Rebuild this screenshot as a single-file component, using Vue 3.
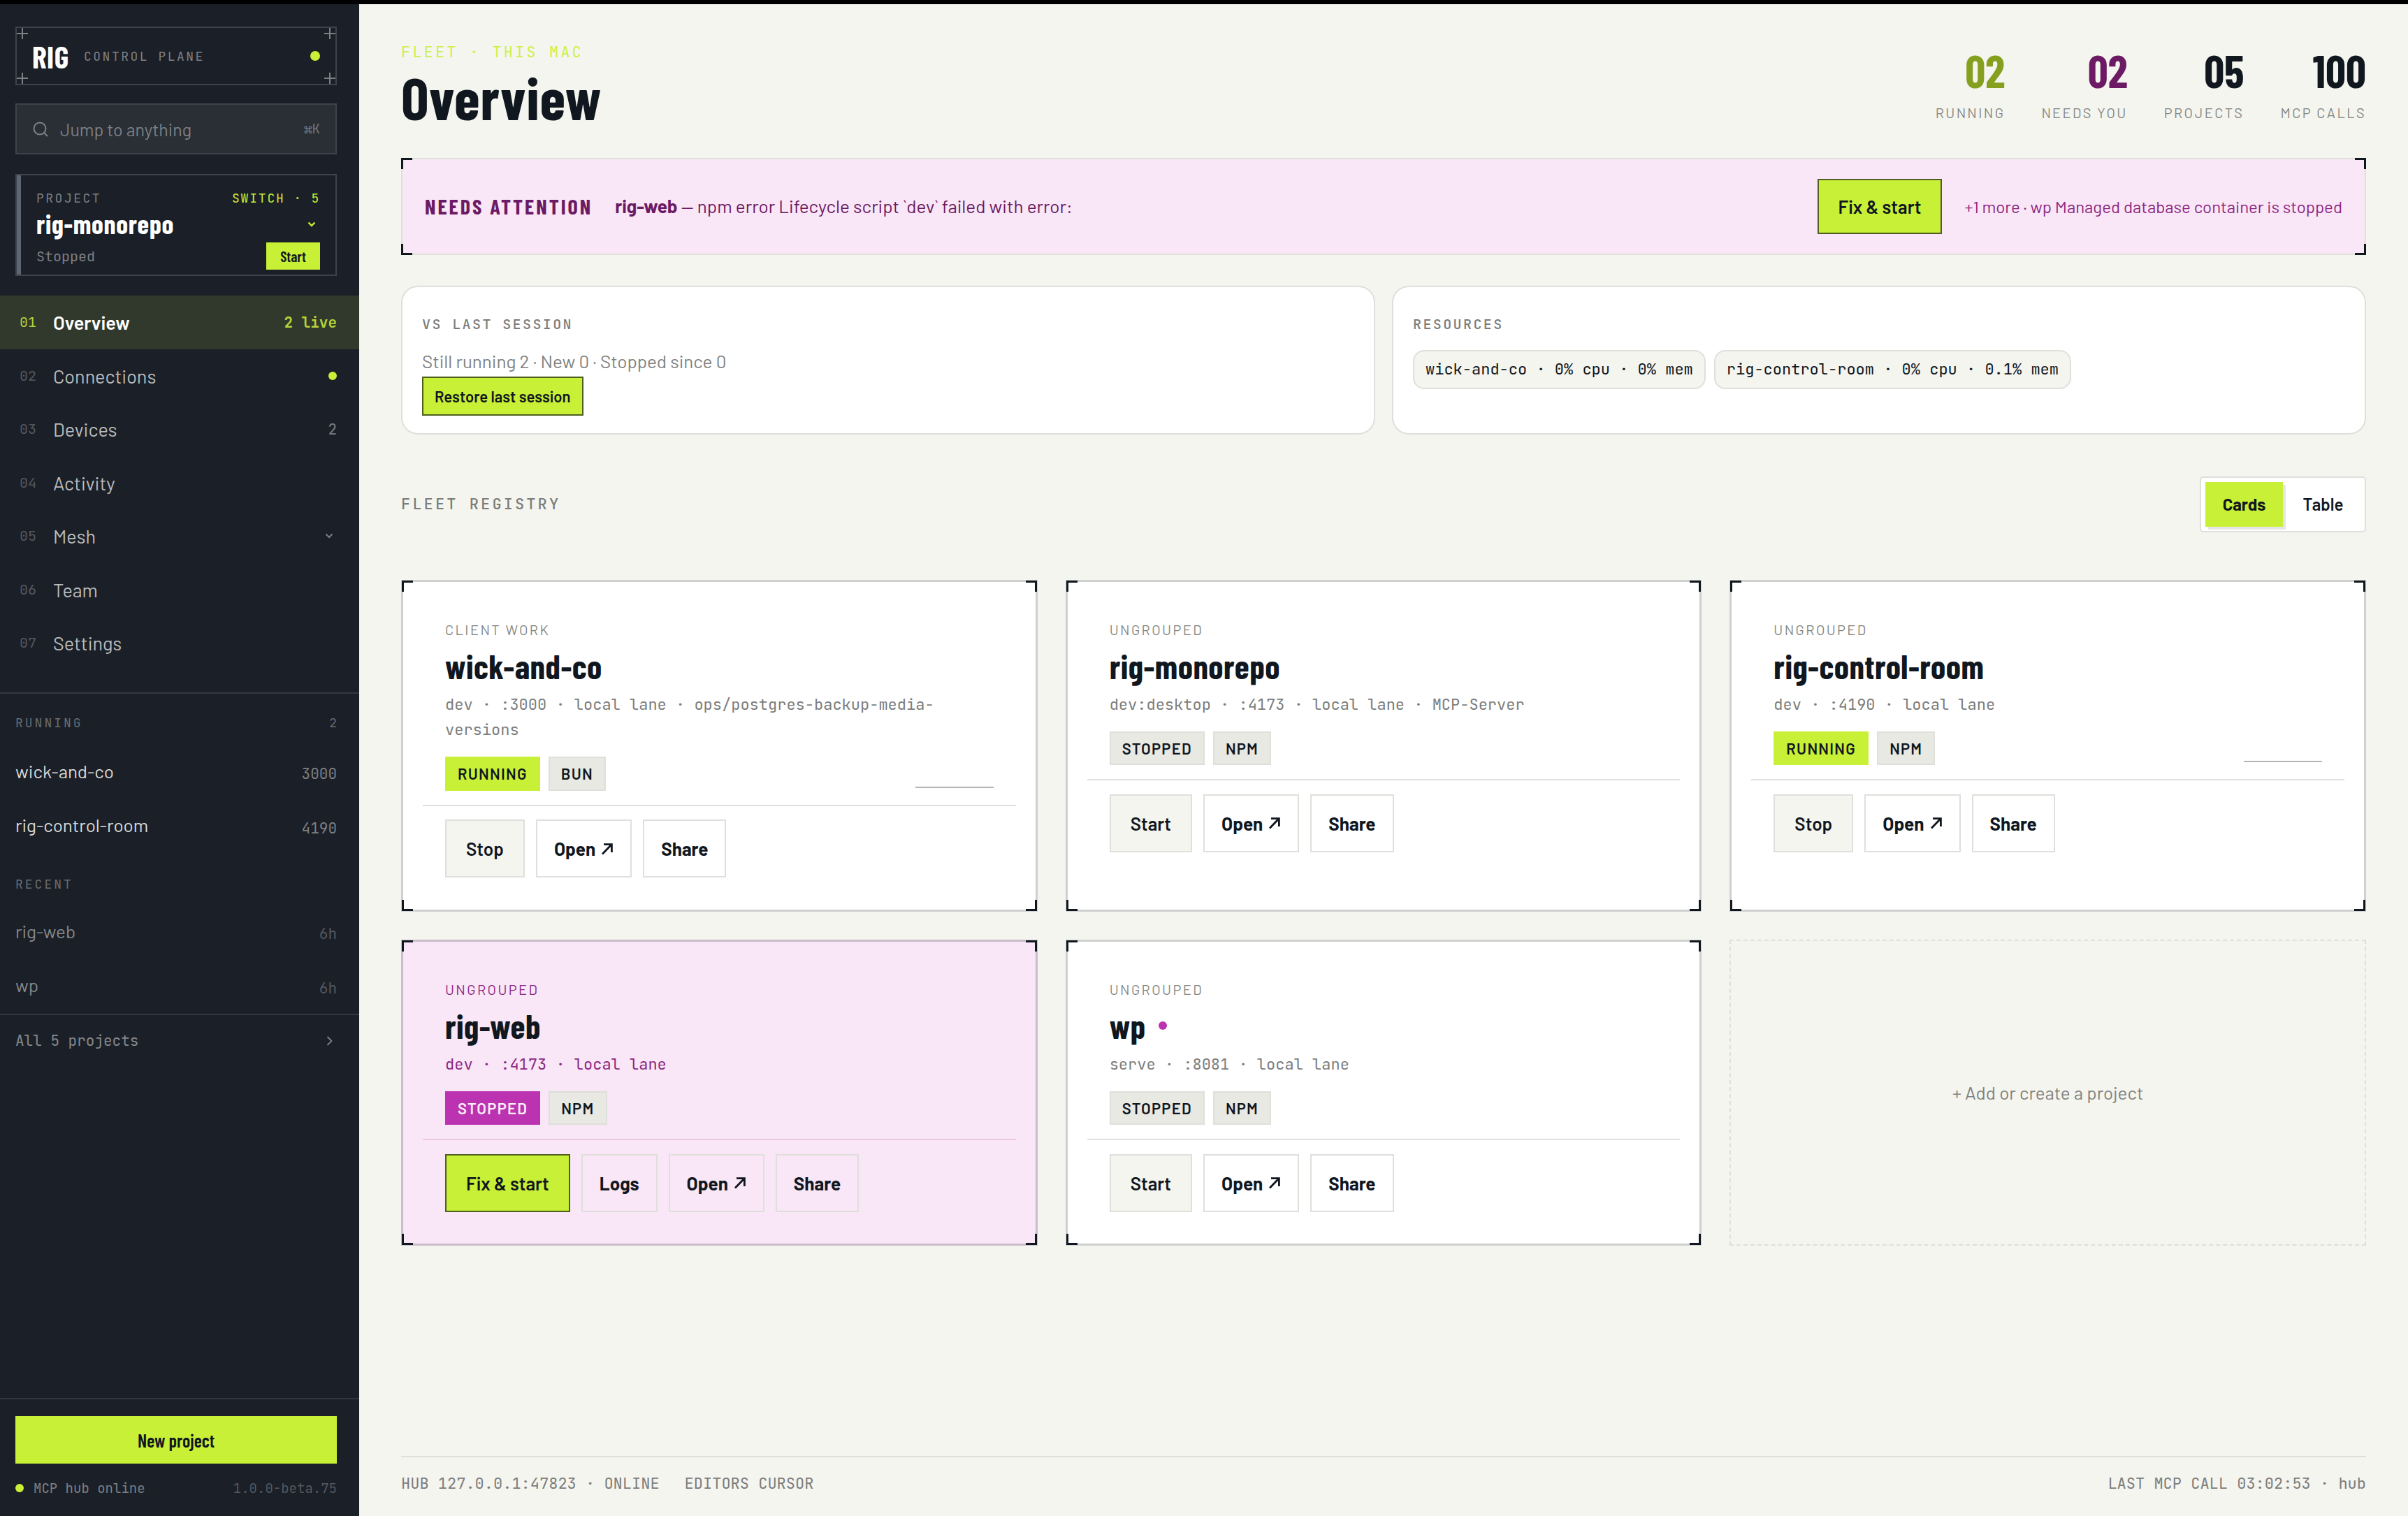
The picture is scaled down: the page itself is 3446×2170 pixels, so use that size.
<script setup>
const navItems = [
  { num: '01', label: 'Overview', active: true, note: '2 live' },
  { num: '02', label: 'Connections', dot: true },
  { num: '03', label: 'Devices', note: '2' },
  { num: '04', label: 'Activity' },
  { num: '05', label: 'Mesh', chevron: true },
  { num: '06', label: 'Team' },
  { num: '07', label: 'Settings' }
]

const running = [
  { name: 'wick-and-co', meta: '3000' },
  { name: 'rig-control-room', meta: '4190' }
]

const recent = [
  { name: 'rig-web', meta: '6h' },
  { name: 'wp', meta: '6h' }
]

const stats = [
  { value: '02', label: 'Running', tone: 'green' },
  { value: '02', label: 'Needs you', tone: 'plum' },
  { value: '05', label: 'Projects', tone: 'ink' },
  { value: '100', label: 'MCP calls', tone: 'ink' }
]

const resources = [
  'wick-and-co · 0% cpu · 0% mem',
  'rig-control-room · 0% cpu · 0.1% mem'
]

const projects = [
  {
    group: 'Client work',
    name: 'wick-and-co',
    meta: 'dev · :3000 · local lane · ops/postgres-backup-media-versions',
    status: 'Running',
    manager: 'Bun',
    action: 'Stop'
  },
  {
    group: 'Ungrouped',
    name: 'rig-monorepo',
    meta: 'dev:desktop · :4173 · local lane · MCP-Server',
    status: 'Stopped',
    manager: 'NPM',
    action: 'Start'
  },
  {
    group: 'Ungrouped',
    name: 'rig-control-room',
    meta: 'dev · :4190 · local lane',
    status: 'Running',
    manager: 'NPM',
    action: 'Stop'
  },
  {
    group: 'Ungrouped',
    name: 'rig-web',
    meta: 'dev · :4173 · local lane',
    status: 'Stopped',
    manager: 'NPM',
    action: 'Fix & start',
    failed: true
  },
  {
    group: 'Ungrouped',
    name: 'wp',
    meta: 'serve · :8081 · local lane',
    status: 'Stopped',
    manager: 'NPM',
    action: 'Start',
    warn: true
  }
]
</script>

<template>
  <div class="app">
    <aside class="sidebar">
      <div class="brand">
        <span class="brand__name">RIG</span>
        <span class="brand__sub">CONTROL PLANE</span>
        <span class="brand__dot"></span>
        <i class="cross cross--tl"></i>
        <i class="cross cross--tr"></i>
        <i class="cross cross--bl"></i>
        <i class="cross cross--br"></i>
      </div>

      <div class="search">
        <svg class="search__icon" viewBox="0 0 24 24" fill="none" stroke="currentColor" stroke-width="2" stroke-linecap="round">
          <circle cx="11" cy="11" r="8.5" />
          <path d="M17.2 17.2 L21.5 21.5" />
        </svg>
        <span class="search__text">Jump to anything</span>
        <kbd class="search__key">⌘K</kbd>
      </div>

      <div class="current">
        <div class="current__top">
          <span class="current__label">PROJECT</span>
          <span class="current__switch">SWITCH · 5</span>
        </div>
        <div class="current__mid">
          <span class="current__name">rig-monorepo</span>
          <svg class="chevron chevron--lime" viewBox="0 0 24 24" fill="none" stroke="currentColor" stroke-width="2.4">
            <path d="M7.5 9.5 L12 14 L16.5 9.5" />
          </svg>
        </div>
        <div class="current__bottom">
          <span class="current__state">Stopped</span>
          <button class="current__start">Start</button>
        </div>
      </div>

      <nav class="nav">
        <a v-for="item in navItems" :key="item.num" :class="['nav__item', { 'nav__item--active': item.active }]">
          <span class="nav__num">{{ item.num }}</span>
          <span class="nav__label">{{ item.label }}</span>
          <span v-if="item.note" class="nav__note">{{ item.note }}</span>
          <span v-if="item.dot" class="nav__dot"></span>
          <svg v-if="item.chevron" class="chevron chevron--nav" viewBox="0 0 24 24" fill="none" stroke="currentColor" stroke-width="2">
            <path d="M7.5 9.5 L12 14 L16.5 9.5" />
          </svg>
        </a>
      </nav>

      <section class="list">
        <div class="list__head">
          <span>RUNNING</span>
          <span class="list__count">2</span>
        </div>
        <div v-for="row in running" :key="row.name" class="list__row">
          <span class="list__name">{{ row.name }}</span>
          <span class="list__meta">{{ row.meta }}</span>
        </div>
        <div class="list__head list__head--recent">
          <span>RECENT</span>
        </div>
        <div v-for="row in recent" :key="row.name" class="list__row list__row--recent">
          <span class="list__name">{{ row.name }}</span>
          <span class="list__meta">{{ row.meta }}</span>
        </div>
      </section>

      <a class="all-projects">
        <span>All 5 projects</span>
        <svg class="chevron chevron--nav" viewBox="0 0 24 24" fill="none" stroke="currentColor" stroke-width="1.8">
          <path d="M9.5 6 L15.5 12 L9.5 18" />
        </svg>
      </a>

      <div class="sidebar__foot">
        <button class="new-project">New project</button>
        <div class="hub">
          <span class="hub__dot"></span>
          <span class="hub__text">MCP hub online</span>
          <span class="hub__version">1.0.0-beta.75</span>
        </div>
      </div>
    </aside>

    <main class="main">
      <header class="header">
        <div class="header__titles">
          <div class="header__eyebrow">FLEET · THIS MAC</div>
          <h1 class="header__title">Overview</h1>
        </div>
        <div class="stats">
          <div v-for="stat in stats" :key="stat.label" class="stat">
            <div :class="['stat__value', `stat__value--${stat.tone}`]">{{ stat.value }}</div>
            <div class="stat__label">{{ stat.label }}</div>
          </div>
        </div>
      </header>

      <section class="banner corners">
        <strong class="banner__title">NEEDS ATTENTION</strong>
        <p class="banner__text"><b>rig-web</b> — npm error Lifecycle script `dev` failed with error:</p>
        <button class="btn btn--lime banner__btn">Fix &amp; start</button>
        <span class="banner__more">+1 more · wp Managed database container is stopped</span>
      </section>

      <div class="panels">
        <section class="panel">
          <h2 class="panel__title">VS LAST SESSION</h2>
          <p class="panel__text">Still running 2 · New 0 · Stopped since 0</p>
          <button class="btn btn--lime btn--small">Restore last session</button>
        </section>
        <section class="panel">
          <h2 class="panel__title">RESOURCES</h2>
          <div class="pills">
            <span v-for="text in resources" :key="text" class="pill">{{ text }}</span>
          </div>
        </section>
      </div>

      <div class="registry">
        <h2 class="registry__title">FLEET REGISTRY</h2>
        <div class="toggle">
          <button class="toggle__item toggle__item--on">Cards</button>
          <button class="toggle__item">Table</button>
        </div>
      </div>

      <div class="grid">
        <article v-for="p in projects" :key="p.name" :class="['card corners', { 'card--failed': p.failed }]">
          <div class="card__group">{{ p.group }}</div>
          <h3 class="card__name">
            <span class="card__name-text">{{ p.name }}</span>
            <span v-if="p.warn" class="card__warn"></span>
          </h3>
          <p class="card__meta">{{ p.meta }}</p>
          <div class="card__badges">
            <span :class="['badge', { 'badge--running': p.status === 'Running', 'badge--failed': p.failed }]">{{ p.status }}</span>
            <span class="badge">{{ p.manager }}</span>
            <span v-if="p.status === 'Running'" class="card__spark"></span>
          </div>
          <div class="card__actions">
            <button :class="['btn', p.failed ? 'btn--lime' : 'btn--soft']">{{ p.action }}</button>
            <button v-if="p.failed" class="btn btn--ghost">Logs</button>
            <button class="btn btn--ghost">
              Open
              <svg class="btn__arrow" viewBox="0 0 18 18" fill="none" stroke="currentColor" stroke-width="2.8">
                <path d="M2 16.5 L15 3 M4 2.6 H15.4 V14" />
              </svg>
            </button>
            <button class="btn btn--ghost">Share</button>
          </div>
        </article>
        <div class="add">+ Add or create a project</div>
      </div>

      <footer class="footer">
        <span>HUB 127.0.0.1:47823 · ONLINE</span>
        <span class="footer__editors">EDITORS CURSOR</span>
        <span class="footer__last">LAST MCP CALL 03:02:53 · hub</span>
      </footer>
    </main>
  </div>
</template>

<style>
body {
  background: #f5f5ef;
}
</style>

<style scoped>
.app {
  --ink: #10171f;
  --lime: #c8f036;
  --plum: #6b1a63;
  --line: #dfdfdb;
  --mono: 'JetBrains Mono', 'DejaVu Sans Mono', monospace;
  --cond: 'Barlow Condensed', Roboto, sans-serif;
  display: flex;
  box-sizing: border-box;
  width: 3446px;
  height: 2170px;
  border-top: 6px solid #000;
  background: #f5f5ef;
  color: var(--ink);
  font-family: Barlow, Roboto, sans-serif;
  font-size: 26px;
  white-space: nowrap;
}

.app * {
  box-sizing: border-box;
}

h1,
h2,
h3,
p {
  margin: 0;
  font-weight: 400;
}

button {
  margin: 0;
  padding: 0;
  border: 0;
  color: inherit;
  font: inherit;
}

/* Sidebar */
.sidebar {
  display: flex;
  flex-direction: column;
  flex: none;
  width: 514px;
  padding-top: 32px;
  background: #1b1f27;
}

.brand,
.search,
.current {
  flex: none;
  width: 460px;
  margin-left: 22px;
  border: 2px solid #3e424a;
}

.brand {
  position: relative;
  display: flex;
  align-items: center;
  height: 84px;
  padding: 0 22px;
}

.brand__name {
  width: 74px;
  color: #fff;
  font-family: var(--cond);
  font-size: 44px;
  font-weight: 700;
  letter-spacing: 0.4px;
}

.brand__sub {
  color: #7d8085;
  font-family: var(--mono);
  font-size: 18px;
  letter-spacing: 2.5px;
}

.brand__dot {
  width: 14px;
  height: 14px;
  margin-left: auto;
  border-radius: 50%;
  background: var(--lime);
}

.cross {
  position: absolute;
  width: 16px;
  height: 16px;
  background:
    linear-gradient(#7d8085, #7d8085) center / 2px 16px no-repeat,
    linear-gradient(#7d8085, #7d8085) center / 16px 2px no-repeat;
}

.cross--tl {
  top: 0;
  left: 0;
}

.cross--tr {
  top: 0;
  right: 0;
}

.cross--bl {
  bottom: 0;
  left: 0;
}

.cross--br {
  right: 0;
  bottom: 0;
}

.search {
  display: flex;
  align-items: center;
  height: 73px;
  margin-top: 26px;
  padding: 0 22px;
  background: #2a2e35;
  color: #7d8085;
}

.search__icon {
  width: 24px;
  height: 24px;
  margin-right: 16px;
}

.search__text {
  font-size: 25px;
}

.search__key {
  margin-left: auto;
  color: #72767b;
  font-family: var(--mono);
  font-size: 19px;
}

.current {
  height: 146px;
  margin-top: 28px;
  padding: 20px 22px 0 28px;
  box-shadow: inset 6px 0 0 #5d6674;
}

.current__top,
.current__mid,
.current__bottom {
  display: flex;
  align-items: center;
  justify-content: space-between;
}

.current__top {
  height: 24px;
  font-family: var(--mono);
  font-size: 18px;
}

.current__label {
  color: #7d8085;
  letter-spacing: 2.5px;
}

.current__switch {
  color: var(--lime);
  letter-spacing: 1.8px;
}

.current__mid {
  height: 40px;
  margin: 6px 0;
}

.current__name {
  padding-bottom: 3px;
  color: #fff;
  font-family: var(--cond);
  font-size: 38px;
  font-weight: 700;
  letter-spacing: 0.7px;
}

.current__bottom {
  height: 39px;
}

.current__state {
  color: #7d8085;
  font-family: var(--mono);
  font-size: 20px;
}

.current__start {
  width: 77px;
  height: 39px;
  background: var(--lime);
  color: var(--ink);
  font-family: var(--cond);
  font-size: 21px;
  font-weight: 600;
}

.chevron {
  flex: none;
  width: 24px;
  height: 24px;
}

.chevron--lime {
  color: var(--lime);
}

.chevron--nav {
  margin-left: auto;
  margin-right: -1px;
  color: #7d8085;
}

.nav {
  margin-top: 28px;
}

.nav__item {
  display: flex;
  align-items: center;
  height: 76.5px;
  padding: 0 32px 0 28px;
  color: #b9bbbd;
  font-size: 27px;
}

.nav__item--active {
  background: #31392c;
  color: #fff;
  font-weight: 600;
}

.nav__num {
  width: 48px;
  color: #54585f;
  font-family: var(--mono);
  font-size: 20px;
  font-weight: 400;
}

.nav__note {
  margin-left: auto;
  color: #7d8085;
  font-family: var(--mono);
  font-size: 21px;
}

.nav__item--active .nav__num,
.nav__item--active .nav__note {
  color: #b3d438;
}

.nav__dot {
  width: 12px;
  height: 12px;
  margin-left: auto;
  border-radius: 50%;
  background: var(--lime);
}

.list {
  margin-top: 32px;
  border-top: 2px solid #33373f;
  border-bottom: 2px solid #33373f;
}

.list__head {
  display: flex;
  align-items: center;
  justify-content: space-between;
  height: 74px;
  padding: 10px 32px 0 22px;
  color: #686c72;
  font-family: var(--mono);
  font-size: 18px;
  letter-spacing: 3px;
}

.list__count {
  letter-spacing: 0;
}

.list__head--recent {
  padding-top: 13px;
}

.list__row {
  display: flex;
  align-items: center;
  justify-content: space-between;
  height: 77.5px;
  padding: 0 32px 0 22px;
  color: #d9dad9;
}

.list__name {
  padding-bottom: 4px;
}

.list__meta {
  padding-top: 5px;
  color: #7d8085;
  font-family: var(--mono);
  font-size: 21px;
}

.list__row--recent {
  color: #85888b;
}

.list__row--recent .list__meta {
  color: #54585f;
}

.all-projects {
  display: flex;
  align-items: center;
  height: 74px;
  padding: 0 32px 0 22px;
  color: #85888b;
  font-family: var(--mono);
  font-size: 21px;
}

.sidebar__foot {
  margin-top: auto;
  padding: 24px 32px 5px 22px;
  border-top: 2px solid #33373f;
}

.new-project {
  display: block;
  width: 460px;
  height: 68px;
  background: var(--lime);
  color: var(--ink);
  font-family: var(--cond);
  font-size: 26px;
  font-weight: 600;
}

.hub {
  display: flex;
  align-items: center;
  height: 70px;
  color: #7d8085;
  font-family: var(--mono);
  font-size: 19px;
}

.hub__dot {
  width: 12px;
  height: 12px;
  margin-right: 14px;
  border-radius: 50%;
  background: var(--lime);
}

.hub__version {
  margin-left: auto;
  color: #54585f;
}

/* Main column */
.main {
  display: flex;
  flex: 1;
  flex-direction: column;
  padding: 0 60px;
}

.header {
  display: flex;
  justify-content: space-between;
  height: 220px;
}

.header__titles {
  padding-top: 54px;
}

.header__eyebrow {
  color: #cdf04a;
  font-family: var(--mono);
  font-size: 22px;
  letter-spacing: 3.1px;
  line-height: 30px;
}

.header__title {
  margin-top: 4px;
  font-family: var(--cond);
  font-size: 84px;
  font-weight: 700;
  letter-spacing: 0.8px;
  line-height: 90px;
}

.stats {
  display: flex;
  gap: 52px;
  padding-top: 63px;
}

.stat {
  text-align: right;
}

.stat__value {
  font-family: var(--cond);
  font-size: 64px;
  font-weight: 700;
  line-height: 64px;
}

.stat__value--green {
  color: #859f1f;
}

.stat__value--plum {
  color: var(--plum);
}

.stat__label {
  margin-top: 15px;
  color: #858783;
  font-size: 20px;
  letter-spacing: 2.4px;
  line-height: 26px;
  text-transform: uppercase;
}

/* Crop-mark corners drawn over the border */
.corners {
  position: relative;
}

.corners::after {
  --c: linear-gradient(var(--ink), var(--ink));
  content: '';
  position: absolute;
  inset: -2px;
  background:
    var(--c) left top / 16px 3px,
    var(--c) left top / 3px 16px,
    var(--c) right top / 16px 3px,
    var(--c) right top / 3px 16px,
    var(--c) left bottom / 16px 3px,
    var(--c) left bottom / 3px 16px,
    var(--c) right bottom / 16px 3px,
    var(--c) right bottom / 3px 16px;
  background-repeat: no-repeat;
  pointer-events: none;
}

.banner {
  display: flex;
  align-items: center;
  flex: none;
  height: 138.5px;
  padding: 0 32px;
  border: 2px solid var(--line);
  background: #f9e6f6;
  color: var(--plum);
}

.banner__title {
  font-family: var(--cond);
  font-size: 30px;
  font-weight: 700;
  letter-spacing: 3px;
}

.banner__text {
  margin-left: 32px;
  padding-bottom: 2px;
}

.btn {
  display: flex;
  align-items: center;
  justify-content: center;
  height: 83px;
  padding: 0 24px;
  border: 2px solid var(--line);
  background: transparent;
  color: var(--ink);
  font-size: 26px;
  font-weight: 700;
}

.btn--soft {
  padding: 0 28px;
  background: #f5f5ef;
  font-weight: 600;
}

.btn--lime {
  padding: 0 28px;
  border-color: #4f5f1e;
  background: var(--lime);
  font-weight: 600;
}

.banner__btn {
  height: 79px;
  margin-left: auto;
}

.banner__more {
  margin-left: 32px;
  color: #8c2782;
  font-size: 24px;
}

.btn--small {
  height: 55.5px;
  margin-top: 2px;
  padding: 0 16px;
  font-size: 22px;
}

.btn__arrow {
  width: 18px;
  height: 18px;
  margin-left: 8px;
}

.panels {
  display: grid;
  grid-template-columns: 1fr 1fr;
  gap: 24px;
  margin-top: 44.5px;
}

.panel {
  height: 212.5px;
  padding: 39px 28px 0;
  border: 2px solid var(--line);
  border-radius: 24px;
  background: #fff;
}

.panel__title,
.registry__title {
  color: #7b7d7c;
  font-family: var(--mono);
  font-size: 20px;
  font-weight: 500;
  letter-spacing: 2.4px;
  line-height: 28px;
}

.panel__text {
  margin-top: 19px;
  color: #808280;
  line-height: 40px;
}

.pills {
  display: flex;
  gap: 12px;
  margin-top: 23px;
}

.pill {
  height: 56px;
  padding: 0 16px;
  border: 2px solid var(--line);
  border-radius: 16px;
  background: #f5f5ef;
  font-family: var(--mono);
  font-size: 22px;
  line-height: 52px;
}

.registry {
  display: flex;
  align-items: center;
  justify-content: space-between;
  height: 80px;
  margin-top: 60px;
}

.registry__title {
  font-size: 22px;
  letter-spacing: 3.1px;
}

.toggle {
  display: flex;
  gap: 4px;
  width: 238px;
  height: 80px;
  padding: 6px;
  border: 2px solid var(--line);
  border-radius: 5px;
  background: #fff;
}

.toggle__item {
  width: 107px;
  height: 64px;
  background: transparent;
  font-size: 24px;
  font-weight: 600;
}

.toggle__item--on {
  width: 111px;
  background: var(--lime);
  box-shadow: 4px 4px 0 #e4e6e6;
  font-weight: 700;
}

.grid {
  display: grid;
  grid-template-columns: repeat(3, 1fr);
  grid-template-rows: 475px 438px;
  gap: 40px;
  margin-top: 68px;
}

.card {
  padding: 54px 60px 0;
  border: 3px solid #cfd0d0;
  background: #fff;
}

.card--failed {
  border-color: #c9bccb;
  background: #f9e6f6;
}

.card__group {
  color: #858783;
  font-size: 20px;
  letter-spacing: 2.4px;
  line-height: 28px;
  text-transform: uppercase;
}

.card__name {
  display: flex;
  align-items: center;
  height: 58px;
  margin-top: 9.5px;
  font-family: var(--cond);
  font-size: 48px;
  font-weight: 700;
  letter-spacing: 0.5px;
}

.card__warn {
  width: 12px;
  height: 12px;
  margin-left: 18px;
  border-radius: 50%;
  background: #bb33b0;
}

.card__meta {
  margin-top: 8.5px;
  color: #7b7d7c;
  font-family: var(--mono);
  font-size: 22px;
  line-height: 36.3px;
  white-space: normal;
}

.card--failed .card__group,
.card--failed .card__meta {
  color: #8c2782;
}

.card__badges {
  display: flex;
  gap: 12px;
  margin-top: 20px;
}

.badge {
  height: 48.5px;
  padding: 0 16px;
  border: 2px solid var(--line);
  background: #e9e9e3;
  font-size: 22px;
  font-weight: 600;
  letter-spacing: 1.3px;
  line-height: 44.5px;
  text-transform: uppercase;
}

.badge--running {
  border-color: var(--lime);
  background: var(--lime);
}

.badge--failed {
  border-color: #bb33b0;
  background: #bb33b0;
  color: #fdeefb;
}

.card__spark {
  align-self: flex-end;
  width: 112px;
  height: 2px;
  margin: 0 0 4px auto;
  background: #b4b5b4;
}

.card__actions {
  display: flex;
  gap: 16px;
  margin: 20px -32px 0;
  padding: 19.5px 32px 0;
  border-top: 2px solid var(--line);
}

.card--failed .card__actions {
  border-color: #ecc8e5;
}

.add {
  display: flex;
  align-items: center;
  justify-content: center;
  border: 2px dashed var(--line);
  color: #80827f;
}

.footer {
  display: flex;
  align-items: center;
  flex: none;
  height: 77px;
  margin-top: auto;
  margin-bottom: 9px;
  border-top: 2px solid var(--line);
  color: #7b7d7c;
  font-family: var(--mono);
  font-size: 22px;
}

.footer__editors {
  margin-left: 36px;
}

.footer__last {
  margin-left: auto;
}
</style>
